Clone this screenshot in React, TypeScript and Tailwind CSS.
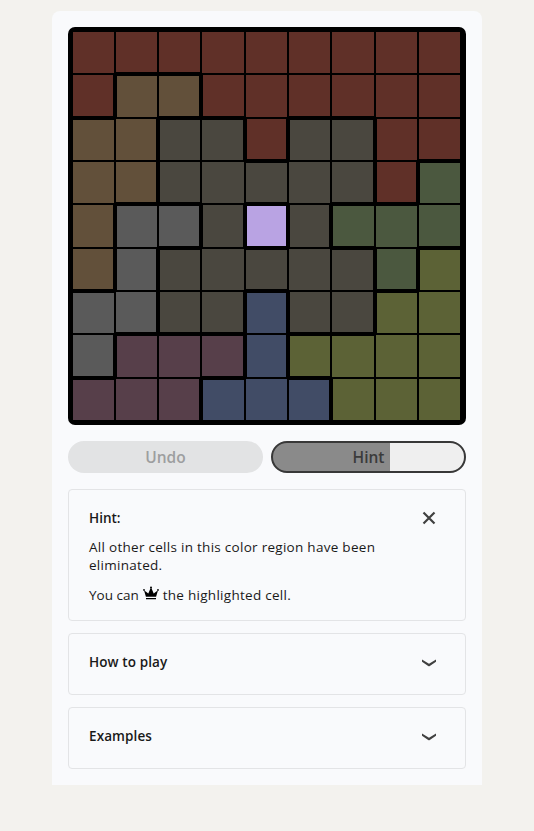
import React from "react";

const regions = [
  "RRRRRRRRR",
  "RBBRRRRRR",
  "BBKKRKKRR",
  "BBKKKKKRG",
  "BSSKPKGGG",
  "BSKKKKKGO",
  "SSKKNKKOO",
  "SMMMNOOOO",
  "MMMNNNOOO",
];

const fills: Record<string, string> = {
  R: "bg-[#603028]",
  B: "bg-[#62503a]",
  K: "bg-[#4a473f]",
  G: "bg-[#4b583f]",
  S: "bg-[#5a5a5a]",
  P: "bg-[#b9a3e3]",
  N: "bg-[#414c66]",
  M: "bg-[#573f4a]",
  O: "bg-[#5c6236]",
};

function Board() {
  const differs = (r: number, c: number, id: string) => {
    const other = regions[r]?.[c];
    return other !== undefined && other !== id;
  };
  return (
    <div className="grid h-[398px] w-[398px] grid-cols-[41px_41px_41px_42px_41px_41px_42px_41px_41px] grid-rows-[41px_42px_41px_41px_42px_41px_41px_42px_41px] gap-[2px] rounded-[7px] bg-black pt-[5px] pl-[5px]">
      {regions.flatMap((row, r) =>
        row.split("").map((id, c) => (
          <div
            key={`${r}-${c}`}
            className={[
              "border-black",
              fills[id],
              differs(r - 1, c, id) ? "border-t" : "",
              differs(r + 1, c, id) ? "border-b" : "",
              differs(r, c - 1, id) ? "border-l" : "",
              differs(r, c + 1, id) ? "border-r" : "",
            ].join(" ")}
          />
        ))
      )}
    </div>
  );
}

function Crown() {
  return (
    <svg width="16" height="15" viewBox="0 0 16 15" className="-mt-1 mr-[4px] ml-[4px] inline-block shrink-0" fill="#000">
      <path d="M2.9 10.7 1 4.3 5.3 7.4 7.5 2.2H8.5L10.7 7.4 15 4.3 13.1 10.7ZM3 11.9H13V13.2H3Z" />
      <circle cx="8" cy="1.5" r="1" />
      <circle cx="1" cy="3.9" r=".9" />
      <circle cx="15" cy="3.9" r=".9" />
    </svg>
  );
}

function Chevron() {
  return (
    <svg width="14" height="8" viewBox="0 0 14 8" fill="#404040" className="mt-px">
      <path d="M0 .5 7 4.7 14 .5V2.8L7.8 7Q7 7.5 6.2 7L0 2.8Z" />
    </svg>
  );
}

function Accordion({ title }: { title: string }) {
  return (
    <button className="flex h-[62px] w-full items-center justify-between rounded-[4px] border border-[#e3e4e6] pr-[29px] pb-[4px] pl-[20px]">
      <span className="text-[13.5px] font-semibold tracking-[0.1px]">{title}</span>
      <Chevron />
    </button>
  );
}

export default function App() {
  return (
    <div className="h-[831px] w-[534px] bg-[#f3f2ee] pt-[11px] font-['Open_Sans','Noto_Sans',sans-serif] text-[#191919]">
      <main className="mx-auto flex h-[774px] w-[430px] flex-col rounded-t-[8px] bg-[#f9fafc] px-4 pt-4">
        <Board />
        <div className="mt-4 flex gap-2">
          <button className="h-8 w-[195px] rounded-full bg-[#e2e3e4] text-[15.5px] leading-8 font-semibold text-[#9d9e9f]">
            <span className="block">Undo</span>
          </button>
          <button className="h-8 w-[195px] rounded-full border-2 border-[#383838] bg-[linear-gradient(to_right,#8a8a8a_117px,#efefef_117px)] text-[15.5px] leading-7 font-semibold text-[#3b3b3b]">
            <span className="block">Hint</span>
          </button>
        </div>
        <section className="mt-4 h-[132px] rounded-[4px] border border-[#e3e4e6] pt-[18px] pr-[29px] pl-[20px]">
          <div className="flex h-5 items-center justify-between">
            <h2 className="text-[13.5px] leading-5 font-semibold">Hint:</h2>
            <svg width="14" height="14" viewBox="0 0 14 14" stroke="#404040" strokeWidth="2.2">
              <path d="m1.5 1.5 11 11m0-11-11 11" />
            </svg>
          </div>
          <p className="mt-[10px] w-[310px] text-[13.5px] leading-[18px] tracking-[0.28px]">
            All other cells in this color region have been eliminated.
          </p>
          <p className="mt-[12px] flex h-[18px] items-center text-[13.5px] leading-[18px] tracking-[0.28px]">
            <span className="tracking-[0px]">You can</span>
            <Crown />
            the highlighted cell.
          </p>
        </section>
        <div className="mt-3 flex flex-col gap-3">
          <Accordion title="How to play" />
          <Accordion title="Examples" />
        </div>
      </main>
    </div>
  );
}
